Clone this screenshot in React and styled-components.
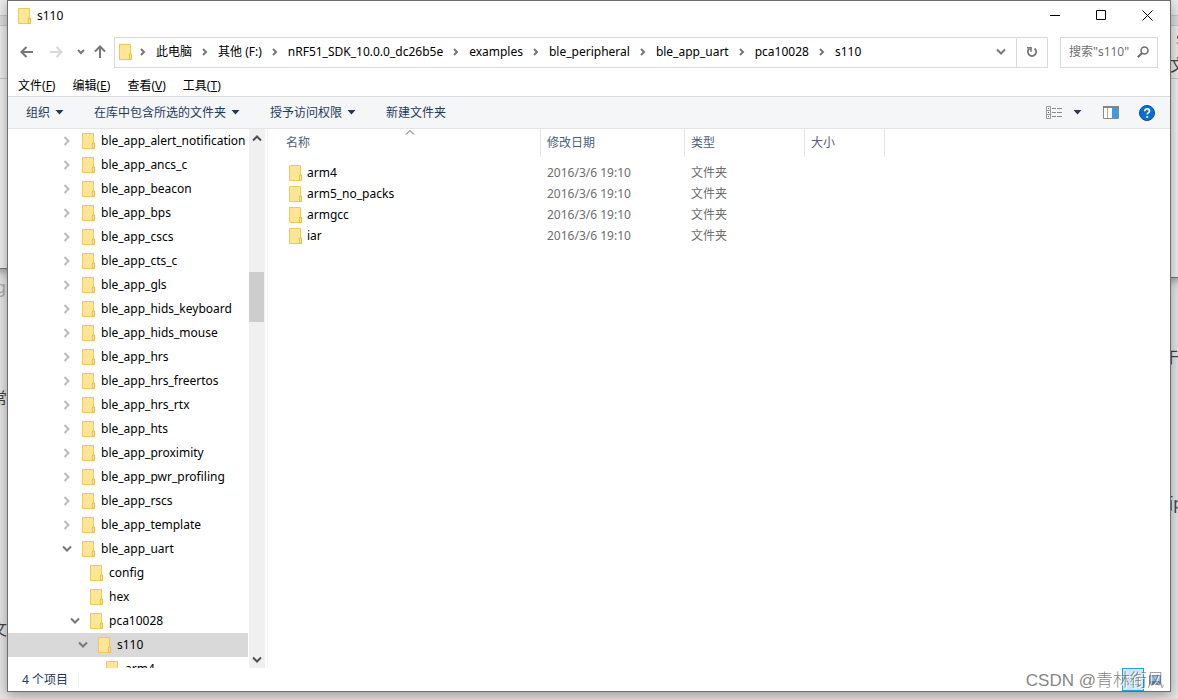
import React from 'react';
import styled, { createGlobalStyle } from 'styled-components';

const GlobalStyle = createGlobalStyle`
  * {
    box-sizing: border-box;
  }

  html,
  body,
  #root {
    height: 100%;
  }

  body {
    margin: 0;
    overflow: hidden;
    color: #000;
    background: #e6e6e6;
    font-family: 'Noto Sans', 'Noto Sans CJK SC', sans-serif;
    font-size: 12px;
    line-height: 16px;
  }

  button,
  input {
    font: inherit;
    color: inherit;
    background: none;
    border: 0;
    padding: 0;
    margin: 0;
  }

  ul {
    list-style: none;
    padding: 0;
    margin: 0;
  }
`;

const Desktop = styled.div`
  position: relative;
  height: 100vh;
  padding: 0 7px 7px;
  overflow: hidden;
`;

const BackWindow = styled.div`
  position: absolute;
  top: 0;
  left: ${({ $side }) => ($side === 'left' ? '-20px' : 'auto')};
  right: ${({ $side }) => ($side === 'right' ? '-20px' : 'auto')};
  width: 60px;
  height: ${({ $height }) => $height}px;
  border-bottom: 1px solid #777;
  background: linear-gradient(#ececec 15px, #c8c8c8 15px 16px, #dcdcdc 16px 25px, #c8c8c8 25px 26px, #ececec 26px 78px, #c8c8c8 78px 79px, #efefef 79px);
  box-shadow: 0 3px 8px rgba(0, 0, 0, 0.3);
`;

const BackText = styled.span`
  position: absolute;
  top: ${({ $top }) => $top}px;
  left: ${({ $left }) => ($left === undefined ? 'auto' : `${$left}px`)};
  right: ${({ $right }) => ($right === undefined ? 'auto' : `${$right}px`)};
  color: ${({ $color }) => $color || '#444'};
  font-size: 16px;
  line-height: 20px;
  white-space: nowrap;
`;

const Window = styled.main`
  position: relative;
  display: flex;
  flex-direction: column;
  height: 100%;
  border: 1px solid #6e6e6e;
  background: #fff;
  box-shadow: 0 3px 12px rgba(0, 0, 0, 0.35);
`;

const TitleBar = styled.header`
  display: flex;
  align-items: center;
  height: 29px;
  padding-left: 10px;
`;

const Title = styled.h1`
  flex: 1;
  margin: 0 0 0 5px;
  font-size: 12px;
  font-weight: 400;
`;

const CaptionButton = styled.button`
  display: grid;
  place-items: center;
  width: 46px;
  height: 28px;
`;

const AddressRow = styled.div`
  display: flex;
  align-items: center;
  height: 44px;
  padding: 0 12px 0 9px;
`;

const NavButton = styled.button`
  display: grid;
  place-items: center;
  width: ${({ $width }) => $width || 20}px;
  height: 24px;
  color: ${({ $muted }) => ($muted ? '#d9d9d9' : '#777')};
`;

const AddressBox = styled.nav`
  display: flex;
  flex: 1;
  align-items: center;
  height: 31px;
  margin-left: 1px;
  padding-left: 4px;
  border: 1px solid #d9d9d9;
  color: #777;
`;

const Crumbs = styled.ol`
  display: flex;
  flex: 1;
  padding: 0;
  margin: 0;
  list-style: none;
`;

const Crumb = styled.li`
  display: flex;
  align-items: center;

  a {
    padding: 0 3px;
    color: #000;
    text-decoration: none;
    white-space: nowrap;
  }
`;

const CrumbArrow = styled.span`
  display: grid;
  place-items: center;
  width: 20px;
`;

const RefreshButton = styled(NavButton)`
  height: 29px;
  border-left: 1px solid #d9d9d9;
`;

const SearchBox = styled.label`
  display: flex;
  align-items: center;
  width: 98px;
  height: 31px;
  margin-left: 12px;
  padding: 0 8px;
  border: 1px solid #d9d9d9;
  color: #707070;

  input {
    flex: 1;
    min-width: 0;
    outline: 0;
  }

  input::placeholder {
    color: #707070;
    opacity: 1;
  }
`;

const MenuBar = styled.nav`
  display: flex;
  align-items: center;
  gap: 17px;
  height: 22px;
  padding: 2px 0 0 10px;
`;

const CommandBar = styled.div`
  display: flex;
  align-items: center;
  height: 33px;
  padding: 0 15px 0 18px;
  border-top: 1px solid #d9dbdd;
  border-bottom: 1px solid #e3e6e9;
  background: #f5f6f8;
  color: #1e395b;
`;

const Command = styled.button`
  display: flex;
  align-items: center;
  gap: 5px;
  margin-right: ${({ $gap }) => $gap}px;
`;

const Spacer = styled.div`
  flex: 1;
`;

const Content = styled.div`
  display: flex;
  flex: 1;
  min-height: 0;
`;

const TreePane = styled.aside`
  display: flex;
  width: 260px;
  border-right: 1px solid #f3f3f3;
`;

const Tree = styled.ul`
  width: 240px;
  overflow: hidden;
`;

const TreeRow = styled.li`
  display: flex;
  align-items: center;
  height: 24px;
  padding-left: ${({ $level }) => 52 + $level * 8}px;
  background: ${({ $selected }) => ($selected ? '#d9d9d9' : 'transparent')};
  white-space: nowrap;

  span {
    margin-left: 5px;
  }
`;

const Toggle = styled.button`
  display: grid;
  place-items: center;
  width: 14px;
  height: 16px;
  margin-right: 8px;
  color: ${({ $open }) => ($open ? '#777' : '#bcbcbc')};
`;

const LeafSpace = styled.div`
  width: 14px;
  margin-right: 8px;
`;

const ScrollBar = styled.div`
  display: flex;
  flex-direction: column;
  justify-content: space-between;
  width: 16px;
  margin-left: 1px;
  background: #f0f0f0;
  color: #505050;
`;

const ScrollButton = styled.button`
  display: grid;
  place-items: center;
  width: 15px;
  height: 17px;
`;

const ScrollTrack = styled.div`
  flex: 1;
  padding-top: 126px;
`;

const ScrollThumb = styled.div`
  width: 15px;
  height: 50px;
  background: #cdcdcd;
`;

const FilePane = styled.section`
  position: relative;
  flex: 1;
  padding-left: 12px;
`;

const SortMark = styled.span`
  position: absolute;
  top: -2px;
  left: 137px;
  display: flex;
  color: #606060;
`;

const FileTable = styled.table`
  border-collapse: separate;
  border-spacing: 0;
  table-layout: fixed;
  width: 605px;

  th {
    height: 28px;
    padding: 0 0 0 6px;
    border-right: 1px solid #e5e5e5;
    color: #4c607a;
    font-weight: 400;
    text-align: left;
  }

  td {
    height: 21px;
    padding: 0 0 0 6px;
    color: #6d6d6d;
  }

  td:first-child {
    padding-left: 9px;
    color: #000;
  }

  tbody::before {
    content: '';
    display: block;
    height: 5px;
  }
`;

const FileName = styled.span`
  display: flex;
  align-items: center;
  gap: 4px;
`;

const StatusBar = styled.footer`
  display: flex;
  align-items: center;
  height: 23px;
  padding: 0 4px 0 14px;
  color: #1e395b;

  p {
    margin: 0;
    padding-right: 10px;
    border-right: 1px solid #f0f0f0;
  }
`;

const ViewButton = styled.button`
  display: grid;
  place-items: center;
  width: 22px;
  height: 23px;
  border: 1px solid ${({ $active }) => ($active ? '#26a0da' : 'transparent')};
  background: ${({ $active }) => ($active ? '#cbe8f6' : 'transparent')};
`;

const Watermark = styled.div`
  position: absolute;
  right: 14px;
  bottom: 6px;
  color: rgba(100, 100, 100, 0.8);
  font-family: 'Liberation Sans', 'Noto Sans CJK SC', sans-serif;
  font-size: 17px;
  line-height: 24px;
  font-weight: 300;
  text-shadow: 1px 1px 0 #fff;
`;

const FolderIcon = () => (
  <svg width="14" height="16" viewBox="0 0 14 16" aria-hidden="true">
    <path d="M.5.5h11v15h-11z" fill="#ffe596" stroke="#efcb55" />
    <path d="M10.500 15.500v-5.500h2v5.500z" fill="#ffe9a2" stroke="#e8bf3c" />
  </svg>
);

const Chevron = ({ dir = 'right', size = 5, width = 2 }) => {
  const turns = { right: 0, down: 90, up: -90 };
  return (
    <svg width="10" height="10" viewBox="0 0 10 10" fill="none" aria-hidden="true">
      <path
        d={`M${5 - size / 2} ${5 - size + 1}l${size - 1} ${size - 1}l${1 - size} ${size - 1}`}
        stroke="currentColor"
        strokeWidth={width}
        transform={`rotate(${turns[dir]} 5 5)`}
      />
    </svg>
  );
};

const Arrow = ({ angle = 0 }) => (
  <svg width="14" height="14" viewBox="0 0 14 14" fill="none" aria-hidden="true">
    <path
      d="M13 7H2M6.500 2L1.500 7l5 5"
      stroke="currentColor"
      strokeWidth="2"
      transform={`rotate(${angle} 7 7)`}
    />
  </svg>
);

const Caret = () => (
  <svg width="9" height="5" viewBox="0 0 9 5" aria-hidden="true">
    <path d="M.5 0h8l-4 4.500z" fill="#1e395b" />
  </svg>
);

const crumbs = [
  '此电脑',
  '其他 (F:)',
  'nRF51_SDK_10.0.0_dc26b5e',
  'examples',
  'ble_peripheral',
  'ble_app_uart',
  'pca10028',
  's110',
];

const menus = [
  ['文件', 'F'],
  ['编辑', 'E'],
  ['查看', 'V'],
  ['工具', 'T'],
];

const closedFolders = [
  'ble_app_alert_notification',
  'ble_app_ancs_c',
  'ble_app_beacon',
  'ble_app_bps',
  'ble_app_cscs',
  'ble_app_cts_c',
  'ble_app_gls',
  'ble_app_hids_keyboard',
  'ble_app_hids_mouse',
  'ble_app_hrs',
  'ble_app_hrs_freertos',
  'ble_app_hrs_rtx',
  'ble_app_hts',
  'ble_app_proximity',
  'ble_app_pwr_profiling',
  'ble_app_rscs',
  'ble_app_template',
];

const tree = [
  ...closedFolders.map((name) => ({ name, level: 0, open: false })),
  { name: 'ble_app_uart', level: 0, open: true },
  { name: 'config', level: 1 },
  { name: 'hex', level: 1 },
  { name: 'pca10028', level: 1, open: true },
  { name: 's110', level: 2, open: true, selected: true },
  { name: 'arm4', level: 3 },
];

const files = ['arm4', 'arm5_no_packs', 'armgcc', 'iar'];

const App = () => (
  <>
    <GlobalStyle />
    <Desktop>
      <BackWindow $side="left" $height={269} />
      <BackWindow $side="right" $height={278} />
      <BackText $top={277} $left={-4} $color="#aaa">g.</BackText>
      <BackText $top={388} $left={-9}>常.</BackText>
      <BackText $top={619} $left={-9}>文件</BackText>
      <BackText $top={28} $right={-6}>s</BackText>
      <BackText $top={55} $right={-8}>文</BackText>
      <BackText $top={347} $right={-1}>于</BackText>
      <BackText $top={493} $right={-5}>面p</BackText>

      <Window>
        <TitleBar>
          <FolderIcon />
          <Title>s110</Title>
          <CaptionButton aria-label="Minimize">
            <svg width="11" height="11" viewBox="0 0 11 11">
              <path d="M0 5.500h10" stroke="#000" />
            </svg>
          </CaptionButton>
          <CaptionButton aria-label="Maximize">
            <svg width="11" height="11" viewBox="0 0 11 11" fill="none">
              <path d="M.5.5h9v9h-9z" stroke="#000" />
            </svg>
          </CaptionButton>
          <CaptionButton aria-label="Close">
            <svg width="11" height="11" viewBox="0 0 11 11" fill="none">
              <path d="M.5.5l10 10M10.500.5l-10 10" stroke="#000" />
            </svg>
          </CaptionButton>
        </TitleBar>

        <AddressRow>
          <NavButton aria-label="Back"><Arrow /></NavButton>
          <NavButton aria-label="Forward" $width={38} $muted><Arrow angle={180} /></NavButton>
          <NavButton aria-label="Recent" $width={12}><Chevron dir="down" size={4} /></NavButton>
          <NavButton aria-label="Up" $width={26}><Arrow angle={90} /></NavButton>
          <AddressBox aria-label="Address">
            <FolderIcon />
            <Crumbs>
              {crumbs.map((name) => (
                <Crumb key={name}>
                  <CrumbArrow><Chevron size={4} /></CrumbArrow>
                  <a href="#path">{name}</a>
                </Crumb>
              ))}
            </Crumbs>
            <NavButton aria-label="History" $width={31}><Chevron dir="down" /></NavButton>
            <RefreshButton aria-label="Refresh" $width={31}>
              <svg width="12" height="12" viewBox="0 0 12 12" fill="none">
                <path d="M3.500 2.500A4.200 4.200 0 1 0 8.500 2.500" stroke="currentColor" strokeWidth="1.800" />
                <path d="M1 1.800h4v4" stroke="currentColor" strokeWidth="1.600" />
              </svg>
            </RefreshButton>
          </AddressBox>
          <SearchBox>
            <input type="text" aria-label="Search" placeholder={'搜索"s110"'} />
            <svg width="12" height="12" viewBox="0 0 12 12" fill="none">
              <circle cx="7.500" cy="4.500" r="3.500" stroke="currentColor" strokeWidth="1.600" />
              <path d="M5 7L.8 11.200" stroke="currentColor" strokeWidth="2" />
            </svg>
          </SearchBox>
        </AddressRow>

        <MenuBar>
          {menus.map(([label, key]) => (
            <button key={key}>{label}(<u>{key}</u>)</button>
          ))}
        </MenuBar>

        <CommandBar>
          <Command $gap={30}>组织 <Caret /></Command>
          <Command $gap={30}>在库中包含所选的文件夹 <Caret /></Command>
          <Command $gap={30}>授予访问权限 <Caret /></Command>
          <Command $gap={0}>新建文件夹</Command>
          <Spacer />
          <Command $gap={21} aria-label="View">
            <svg width="17" height="13" viewBox="0 0 17 13" fill="none">
              <path d="M.5.5h4v12h-4zM.5 4.500h4M.5 8.500h4" stroke="#999" />
              <path d="M6 2.500h4m1 0h5M6 6.500h4m1 0h5M6 10.500h4m1 0h5" stroke="#8a8a8a" />
              <path d="M2 2.500h1" stroke="#2f78c4" />
              <path d="M2 6.500h1" stroke="#c0392b" />
              <path d="M2 10.500h1" stroke="#3a9a50" />
            </svg>
            <Spacer />
            <Caret />
          </Command>
          <Command $gap={20} aria-label="Preview pane">
            <svg width="16" height="13" viewBox="0 0 16 13">
              <path d="M.5.5h15v12H.5z" fill="#fff" stroke="#8a8a8a" />
              <path d="M0 0h16v2H0z" fill="#858585" />
              <path d="M9 2h6v10H9z" fill="#3f9ae6" />
              <path d="M4.500 2v10" stroke="#aaa" />
            </svg>
          </Command>
          <Command $gap={0} aria-label="Help">
            <svg width="16" height="16" viewBox="0 0 16 16" fill="none">
              <circle cx="8" cy="8" r="7.500" fill="#0a6fce" stroke="#094f99" />
              <path d="M5.700 6.200c0-3.200 4.800-3 4.800-.2 0 1.700-2.300 1.700-2.300 3.500" stroke="#fff" strokeWidth="1.700" />
              <circle cx="8.200" cy="12" r="1.100" fill="#fff" />
            </svg>
          </Command>
        </CommandBar>

        <Content>
          <TreePane>
            <Tree>
              {tree.map(({ name, level, open, selected }) => (
                <TreeRow key={`${level}-${name}`} $level={level} $selected={selected}>
                  {open === undefined ? (
                    <LeafSpace />
                  ) : (
                    <Toggle $open={open} aria-label={name}>
                      <Chevron dir={open ? 'down' : 'right'} />
                    </Toggle>
                  )}
                  <FolderIcon />
                  <span>{name}</span>
                </TreeRow>
              ))}
            </Tree>
            <ScrollBar>
              <ScrollButton aria-label="Scroll up"><Chevron dir="up" /></ScrollButton>
              <ScrollTrack><ScrollThumb /></ScrollTrack>
              <ScrollButton aria-label="Scroll down"><Chevron dir="down" /></ScrollButton>
            </ScrollBar>
          </TreePane>

          <FilePane>
            <SortMark><Chevron dir="up" width={1} /></SortMark>
            <FileTable>
              <colgroup>
                <col width="261" />
                <col width="144" />
                <col width="120" />
                <col width="80" />
              </colgroup>
              <thead>
                <tr>
                  <th>名称</th>
                  <th>修改日期</th>
                  <th>类型</th>
                  <th>大小</th>
                </tr>
              </thead>
              <tbody>
                {files.map((name) => (
                  <tr key={name}>
                    <td><FileName><FolderIcon />{name}</FileName></td>
                    <td>2016/3/6 19:10</td>
                    <td>文件夹</td>
                    <td />
                  </tr>
                ))}
              </tbody>
            </FileTable>
          </FilePane>
        </Content>

        <StatusBar>
          <p>4 个项目</p>
          <Spacer />
          <ViewButton $active aria-label="Details">
            <svg width="16" height="12" viewBox="0 0 16 12">
              <path d="M0 1.500h16M0 4.500h16M0 7.500h16M0 10.500h16" stroke="#a5b8c6" strokeDasharray="4 1" />
            </svg>
          </ViewButton>
          <ViewButton aria-label="Large icons">
            <svg width="12" height="10" viewBox="0 0 12 10">
              <path d="M.5.5h11v9H.5z" fill="#8dbdf0" stroke="#7c8a98" />
              <path d="M1 6h10v3H1z" fill="#5a7c94" />
            </svg>
          </ViewButton>
        </StatusBar>
      </Window>
      <Watermark>CSDN @青林衔风</Watermark>
    </Desktop>
  </>
);

export default App;
